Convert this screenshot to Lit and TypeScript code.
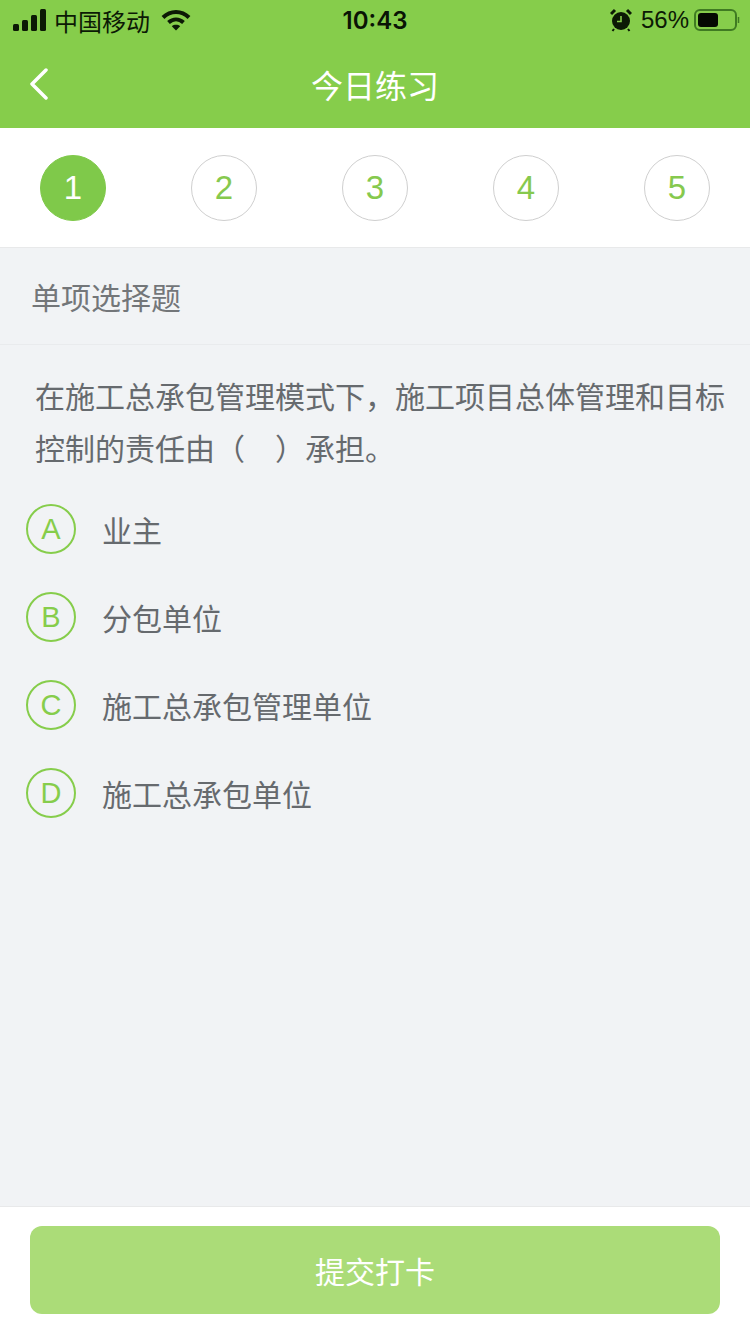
import { LitElement, html, css } from "lit";
import { customElement } from "lit/decorators.js";

const GREEN = "#86cd4b";

@customElement("app-root")
export class AppRoot extends LitElement {
  static styles = css`
    :host {
      display: flex;
      flex-direction: column;
      width: 750px;
      height: 1334px;
      overflow: hidden;
      background: #f1f3f5;
      font-family: "Liberation Sans", "Noto Sans CJK SC", sans-serif;
      color: #666a6e;
    }
    .cjk { font-family: "Noto Sans CJK SC", sans-serif; }
    .head { background: #86cd4b; height: 128px; flex: none; display: flex; flex-direction: column; }
    .status { height: 40px; display: grid; grid-template-columns: 1fr auto 1fr; align-items: center; color: #0c1a05; }
    .s-left { display: flex; align-items: center; padding-left: 13px; font-size: 24px; }
    .s-left svg.sig { margin-right: 7px; }
    .s-left svg.wifi { margin-left: 11px; }
    .time { font-family: Inter, sans-serif; font-weight: 600; font-size: 24px; color: #0a1405; }
    .s-right { display: flex; align-items: center; justify-content: flex-end; padding-right: 10px; font-size: 24px; }
    .s-right .pct { margin: 0 5px 0 9px; }
    .nav { flex: 1; display: flex; align-items: center; justify-content: center; position: relative; color: #fff; font-size: 32px; padding-bottom: 1px; }
    .back { position: absolute; left: 29px; top: 28px; }
    .steps { flex: none; height: 119px; background: #fff; border-bottom: 1px solid #e8e9ea; display: flex; justify-content: space-between; align-items: flex-start; padding: 27px 40px 0; box-sizing: content-box; height: 92px; }
    .step { width: 66px; height: 66px; box-sizing: border-box; border-radius: 50%; border: 1px solid #cfcfcf; color: #86c94e; font-size: 33px; display: flex; align-items: center; justify-content: center; }
    .step.on { background: #7fc94a; border-color: #7fc94a; color: #fff; }
    .kind { flex: none; height: 97px; box-sizing: border-box; border-bottom: 1px solid #e9ebed; padding-left: 31px; display: flex; align-items: center; font-size: 30px; color: #737679; }
    .q { flex: none; margin: 24px 0 0; padding: 0 20px 0 35px; font-size: 30px; line-height: 52px; height: 104px; }
    .opts { flex: 1; display: flex; flex-direction: column; gap: 38px; padding: 31px 0 0 26px; }
    .opt { display: flex; align-items: center; height: 50px; gap: 26px; font-size: 30px; }
    .letter { width: 50px; height: 50px; box-sizing: border-box; border: 2px solid #86cd4b; border-radius: 50%; color: #86cd4b; font-size: 29px; display: flex; align-items: center; justify-content: center; }
    .foot { flex: none; height: 128px; box-sizing: border-box; background: #fff; border-top: 1px solid #e8e9ea; padding: 19px 30px 20px; }
    .btn { height: 88px; border-radius: 12px; background: #abdc78; color: #fff; font-size: 30px; display: flex; align-items: center; justify-content: center; }
  `;

  render() {
    const opts = [["A", "业主"], ["B", "分包单位"], ["C", "施工总承包管理单位"], ["D", "施工总承包单位"]];
    return html`
      <div class="head">
        <div class="status">
          <div class="s-left">
            <svg class="sig" width="34" height="22" viewBox="0 0 34 22" fill="#0c1a05"><rect x="0" y="15" width="6" height="7" rx="1.5"/><rect x="9" y="11" width="6" height="11" rx="1.5"/><rect x="18" y="6" width="6" height="16" rx="1.5"/><rect x="27" y="0" width="6" height="22" rx="1.5"/></svg>
            <span class="cjk">中国移动</span>
            <svg class="wifi" width="30" height="22" viewBox="0 0 30 22" fill="none" stroke="#0c1a05" stroke-width="4"><path d="M2 8.5C9.5 1 20.500 1 28 8.500"/><path d="M7.500 13.500C12 9.500 18 9.500 22.500 13.500"/><path d="M15 21.500 10.800 17.200C13 15.300 17 15.300 19.200 17.200Z" fill="#0c1a05" stroke="none"/></svg>
          </div>
          <div class="time">10:43</div>
          <div class="s-right">
            <svg width="22" height="24" viewBox="0 0 22 24"><circle cx="11" cy="13" r="9" fill="#0c1a05"/><path d="M1 6 5 2M21 6l-4-4" stroke="#0c1a05" stroke-width="3"/><path d="M11 8v5.500H7" stroke="#86cd4b" stroke-width="1.600" fill="none"/><path d="M4 21 2.500 23M18 21l1.500 2" stroke="#0c1a05" stroke-width="2"/></svg>
            <span class="pct">56%</span>
            <svg width="46" height="22" viewBox="0 0 46 22"><rect x="1" y="1" width="41" height="20" rx="5" fill="none" stroke="#3f7a22" stroke-width="2"/><rect x="4" y="4" width="20" height="14" rx="3" fill="#050a02"/><path d="M44.500 8v6" stroke="#3f7a22" stroke-width="1.500"/></svg>
          </div>
        </div>
        <div class="nav">
          <svg class="back" width="20" height="32" viewBox="0 0 20 32" fill="none" stroke="#fff" stroke-width="3.500" stroke-linecap="round" stroke-linejoin="round"><path d="M17 2 3 16l14 14"/></svg>
          <span class="cjk">今日练习</span>
        </div>
      </div>
      <div class="steps">
        ${[1, 2, 3, 4, 5].map((n) => html`<div class="step ${n === 1 ? "on" : ""}">${n}</div>`)}
      </div>
      <div class="kind cjk">单项选择题</div>
      <div class="q cjk">在施工总承包管理模式下，施工项目总体管理和目标控制的责任由（　）承担。</div>
      <div class="opts">
        ${opts.map(([l, t]) => html`<div class="opt"><div class="letter">${l}</div><span class="cjk">${t}</span></div>`)}
      </div>
      <div class="foot"><div class="btn cjk">提交打卡</div></div>
    `;
  }
}
